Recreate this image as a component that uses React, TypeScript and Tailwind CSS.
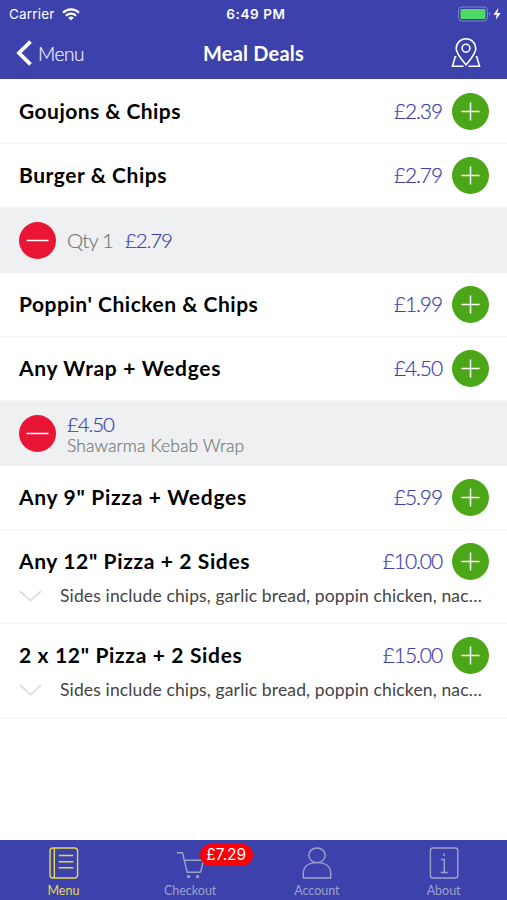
import type { ReactNode } from "react";

interface Added {
  price: string;
  qty?: string;
  detail?: string;
}

interface Deal {
  name: string;
  price: string;
  tracking: string;
  height: string;
  added?: Added;
  description?: string;
}

const sides = "Sides include chips, garlic bread, poppin chicken, nac…";

const deals: Deal[] = [
  { name: "Goujons & Chips", price: "£2.39", tracking: "tracking-[0.45px]", height: "h-[65px]" },
  { name: "Burger & Chips", price: "£2.79", tracking: "tracking-[0.55px]", height: "h-16", added: { qty: "Qty 1", price: "£2.79" } },
  { name: "Poppin' Chicken & Chips", price: "£1.99", tracking: "tracking-[0.52px]", height: "h-16" },
  {
    name: "Any Wrap + Wedges",
    price: "£4.50",
    tracking: "tracking-[0.68px]",
    height: "h-16",
    added: { price: "£4.50", detail: "Shawarma Kebab Wrap" },
  },
  { name: 'Any 9" Pizza + Wedges', price: "£5.99", tracking: "tracking-[0.7px]", height: "h-16" },
  { name: 'Any 12" Pizza + 2 Sides', price: "£10.00", tracking: "tracking-[0.63px]", height: "h-[94px]", description: sides },
  { name: '2 x 12" Pizza + 2 Sides', price: "£15.00", tracking: "tracking-[0.66px]", height: "h-[95px]", description: sides },
];

function StatusBar() {
  return (
    <div className="flex h-7 items-center justify-between pl-[9px] pr-1 font-['Inter',sans-serif] text-[13px]">
      <div className="flex w-40 items-center gap-[7px]">
        <span className="text-[13.5px] tracking-[0.2px]">Carrier</span>
        <svg width="18" height="13" viewBox="0 0 18 13" fill="none" stroke="white" strokeWidth="2.1">
          <path d="M1 4.7a11.4 11.4 0 0 1 16 0" />
          <path d="M3.9 7.7a7.3 7.3 0 0 1 10.2 0" />
          <path d="M9 12.6 6.2 9.8a4 4 0 0 1 5.6 0z" fill="white" stroke="none" />
        </svg>
      </div>
      <span className="text-[13.5px] font-semibold tracking-[0.6px]">6:49 PM</span>
      <div className="flex w-40 items-center justify-end">
        <svg width="45" height="16" viewBox="0 0 45 16">
          <rect x="0.5" y="1" width="29" height="14" rx="3.5" fill="none" stroke="#8085c9" />
          <rect x="2.5" y="3" width="25" height="10" rx="1.5" fill="#4cd964" />
          <path d="M31 5.8q2 2.2 0 4.4z" fill="#8085c9" />
          <path d="M40.4 1.8 35.4 8.8h3.3l-1 5.2 5-7h-3.4z" fill="white" />
        </svg>
      </div>
    </div>
  );
}

function NavBar() {
  return (
    <div className="grid h-[51px] grid-cols-3 items-center pb-px">
      <div className="flex items-center gap-[5px] pl-4">
        <svg width="17" height="26" viewBox="0 0 17 26" fill="none" stroke="white" strokeWidth="3.8">
          <path d="M14.5 1.6 3 13l11.5 11.4" />
        </svg>
        <span className="pt-0.5 text-[19px] font-light tracking-[-0.4px] text-[#eeefff] [-webkit-text-stroke:0.2px]">Menu</span>
      </div>
      <h1 className="text-center text-[20px] font-bold tracking-[0.2px]">Meal Deals</h1>
      <div className="flex justify-end pr-[26px]">
        <svg width="30" height="30" viewBox="0 0 30 30" fill="none" stroke="white" strokeWidth="1.6">
          <path d="M15 26.8C11.5 22.5 5.2 16 5.2 10.6a9.8 9.8 0 0 1 19.6 0c0 5.4-6.3 11.9-9.8 16.2z" />
          <circle cx="15" cy="10.2" r="3.9" />
          <path d="M5.4 18.8H4.2L1.5 28.2h11M24.6 18.8h1.2l2.7 9.4h-11" />
        </svg>
      </div>
    </div>
  );
}

function RoundButton({ color, children }: { color: string; children: ReactNode }) {
  return (
    <button className={`flex size-[37px] shrink-0 items-center justify-center rounded-full ${color}`}>
      <svg width="37" height="37" viewBox="0 0 37 37" stroke="white" strokeWidth="1.5">
        {children}
      </svg>
    </button>
  );
}

function DealRow({ deal, first }: { deal: Deal; first: boolean }) {
  return (
    <>
      <div className={`border-b border-[#f7f7f8] ${deal.height}`}>
        <div className={`flex items-center pl-[19px] pr-[18px] ${first ? "h-[65px]" : "h-[63px]"}`}>
          <span className={`flex-1 whitespace-nowrap pb-px text-[21px] font-bold text-black ${deal.tracking}`}>{deal.name}</span>
          <span className="mr-2.5 pb-px text-[21px] font-light tracking-[-1.1px] text-[#3c41ab] [-webkit-text-stroke:0.2px]">
            {deal.price}
          </span>
          <RoundButton color="bg-[#4ba718]">
            <path d="M18.5 9.5v18M9.5 18.5h18" />
          </RoundButton>
        </div>
        {deal.description && (
          <div className="-mt-[7px] flex h-5 items-center pl-[19px]">
            <svg width="23" height="12" viewBox="0 0 23 12" fill="none" stroke="#dddddf" strokeWidth="1.8">
              <path d="M.8 1 11.5 10.6 22.2 1" />
            </svg>
            <p className="ml-[18px] whitespace-nowrap text-[17.5px] tracking-[0.14px] text-[#444]">{deal.description}</p>
          </div>
        )}
      </div>
      {deal.added && (
        <div className="flex h-[65px] items-center bg-[#eef0f2] pb-px pl-[19px]">
          <RoundButton color="bg-[#e91535]">
            <path d="M7.5 18.5h22" />
          </RoundButton>
          <div className="ml-[11px]">
            <div className="flex items-center gap-3 text-[20.5px] font-light leading-[22px] [-webkit-text-stroke:0.2px]">
              {deal.added.qty && <span className="tracking-[-0.9px] text-[#777]">{deal.added.qty}</span>}
              <span className="tracking-[-1.1px] text-[#3c41ab]">{deal.added.price}</span>
            </div>
            {deal.added.detail && (
              <p className="-mb-0.5 pt-px text-[17.5px] font-light leading-5 tracking-[0.1px] text-[#777] [-webkit-text-stroke:0.2px]">
                {deal.added.detail}
              </p>
            )}
          </div>
        </div>
      )}
    </>
  );
}

function Tab({ label, color, badge, children }: { label: string; color: string; badge?: string; children: ReactNode }) {
  return (
    <div className={`relative flex flex-col items-center pt-[5px] ${color}`}>
      <svg width="34" height="36" viewBox="0 0 34 36" fill="none" stroke="currentColor" strokeWidth="1.4">
        {children}
      </svg>
      <span className="pt-px text-[12.5px] leading-[18px]">{label}</span>
      {badge && (
        <span className="absolute left-[73px] top-[4px] flex h-[22px] w-[53px] items-center justify-center rounded-full bg-[#fb0007] font-['Inter',sans-serif] text-[15.5px] text-white">
          {badge}
        </span>
      )}
    </div>
  );
}

export default function App() {
  return (
    <div className="flex h-[900px] w-[507px] flex-col overflow-hidden bg-white font-['Lato','Noto_Sans',sans-serif]">
      <header className="h-[79px] shrink-0 bg-[#3c41ab] text-white">
        <StatusBar />
        <NavBar />
      </header>
      <main className="flex-1">
        {deals.map((deal, i) => (
          <DealRow key={deal.name} deal={deal} first={i === 0} />
        ))}
      </main>
      <nav className="grid h-[60px] shrink-0 grid-cols-4 bg-[#3c41ab]">
        <Tab label="Menu" color="text-[#e4d94c]">
          <rect x="4" y="3" width="27.6" height="30" rx="3" />
          <path d="M8.3 3v30M12.8 10.5h14.5M12.8 16.7h14.5M12.8 22.7h14.5" />
        </Tab>
        <Tab label="Checkout" color="text-[#9fa2c8]" badge="£7.29">
          <path d="M3.8 7.7h5.6l4.8 19.5h13.5M11 15.2h19.5L27.7 27" />
          <circle cx="15.6" cy="31.6" r="1.7" fill="currentColor" stroke="none" />
          <circle cx="24.6" cy="31.6" r="1.7" fill="currentColor" stroke="none" />
        </Tab>
        <Tab label="Account" color="text-[#9fa2c8]">
          <ellipse cx="17" cy="10.3" rx="8.2" ry="7.3" />
          <path d="M3.3 33v-4.5C3.3 21.5 8.5 17.6 17 17.6s13.7 3.9 13.7 10.9V33z" />
        </Tab>
        <Tab label="About" color="text-[#9fa2c8]">
          <rect x="3.4" y="3" width="27.4" height="30" rx="2.5" />
          <path d="M14 14.5h3.3v13M13.8 27.5h7M17.2 8.5v2.5" />
        </Tab>
      </nav>
    </div>
  );
}
